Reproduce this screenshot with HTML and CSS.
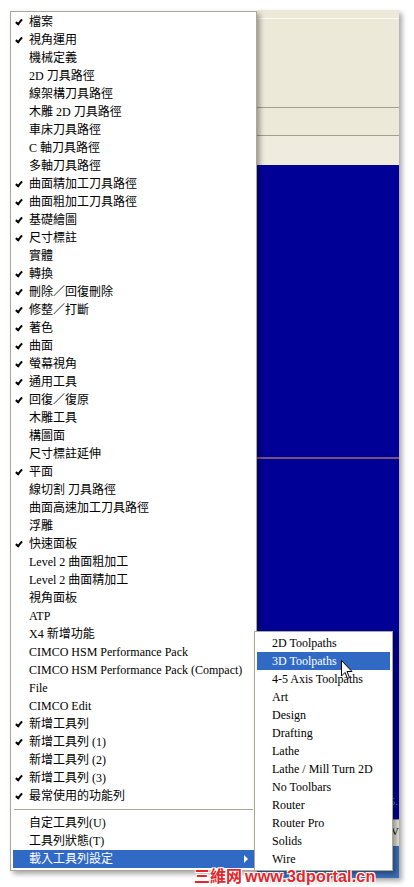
FILE: index.html
```html
<!DOCTYPE html>
<html lang="zh-Hant">
<head>
    <meta charset="UTF-8">
    <meta name="viewport" content="width=device-width, initial-scale=1.0">
    <title>工具列</title>
    <link rel="stylesheet" href="styles.css">
</head>
<body>
    <div class="desktop">
        <div class="app-window">
            <div class="toolbars">
                <div class="tb-row tb-top"></div>
                <div class="tb-row tb-big"></div>
                <div class="tb-row tb-mid"></div>
                <div class="tb-row tb-low"></div>
            </div>
            <div class="viewport">
                <div class="vp-top"></div>
                <div class="vp-bottom"></div>
            </div>
            <div class="status">
                <div class="st-green">5.</div>
                <div class="st-gray">V</div>
                <div class="st-blue"></div>
            </div>
        </div>

        <ul class="menu">
            <li class="item checked">檔案</li>
            <li class="item checked">視角運用</li>
            <li class="item">機械定義</li>
            <li class="item">2D 刀具路徑</li>
            <li class="item">線架構刀具路徑</li>
            <li class="item">木雕 2D 刀具路徑</li>
            <li class="item">車床刀具路徑</li>
            <li class="item">C 軸刀具路徑</li>
            <li class="item">多軸刀具路徑</li>
            <li class="item checked">曲面精加工刀具路徑</li>
            <li class="item checked">曲面粗加工刀具路徑</li>
            <li class="item checked">基礎繪圖</li>
            <li class="item checked">尺寸標註</li>
            <li class="item">實體</li>
            <li class="item checked">轉換</li>
            <li class="item checked">刪除／回復刪除</li>
            <li class="item checked">修整／打斷</li>
            <li class="item checked">著色</li>
            <li class="item checked">曲面</li>
            <li class="item checked">螢幕視角</li>
            <li class="item checked">通用工具</li>
            <li class="item checked">回復／復原</li>
            <li class="item">木雕工具</li>
            <li class="item">構圖面</li>
            <li class="item">尺寸標註延伸</li>
            <li class="item checked">平面</li>
            <li class="item">線切割 刀具路徑</li>
            <li class="item">曲面高速加工刀具路徑</li>
            <li class="item">浮雕</li>
            <li class="item checked">快速面板</li>
            <li class="item">Level 2 曲面粗加工</li>
            <li class="item">Level 2 曲面精加工</li>
            <li class="item">視角面板</li>
            <li class="item">ATP</li>
            <li class="item">X4 新增功能</li>
            <li class="item">CIMCO HSM Performance Pack</li>
            <li class="item">CIMCO HSM Performance Pack (Compact)</li>
            <li class="item">File</li>
            <li class="item">CIMCO Edit</li>
            <li class="item checked">新增工具列</li>
            <li class="item checked">新增工具列 (1)</li>
            <li class="item">新增工具列 (2)</li>
            <li class="item checked">新增工具列 (3)</li>
            <li class="item checked">最常使用的功能列</li>
            <li class="separator"></li>
            <li class="item">自定工具列(U)</li>
            <li class="item">工具列狀態(T)</li>
            <li class="item active has-sub">載入工具列設定</li>
        </ul>

        <ul class="menu submenu">
            <li class="item">2D Toolpaths</li>
            <li class="item active">3D Toolpaths</li>
            <li class="item">4-5 Axis Toolpaths</li>
            <li class="item">Art</li>
            <li class="item">Design</li>
            <li class="item">Drafting</li>
            <li class="item">Lathe</li>
            <li class="item">Lathe / Mill Turn 2D</li>
            <li class="item">No Toolbars</li>
            <li class="item">Router</li>
            <li class="item">Router Pro</li>
            <li class="item">Solids</li>
            <li class="item">Wire</li>
        </ul>

        <svg class="cursor" width="12" height="20" viewBox="0 0 12 20">
            <path d="M0.5 0.5 L0.5 16 L4 12.5 L6.5 18.5 L8.5 17.5 L6 11.5 L11 11.5 Z" fill="#fff" stroke="#000" stroke-width="1"/>
        </svg>

        <div class="watermark">
            <span class="wm-cn">三維网</span><span class="wm-url">www.3dportal.cn</span>
        </div>
    </div>
</body>
</html>
```

FILE: styles.css
```css
body {
    margin: 0;
    background-color: #fff;
    font-family: "Liberation Serif", "Noto Sans CJK TC", serif;
    font-size: 12px;
}
.desktop {
    position: relative;
    width: 414px;
    height: 887px;
    overflow: hidden;
}

/* background application window */
.app-window {
    position: absolute;
    left: 257px;
    top: 10px;
    width: 142px;
    height: 868px;
    display: flex;
    flex-direction: column;
    background-color: #ece9d8;
    box-shadow: 3px 3px 5px rgba(0, 0, 0, 0.35);
}
.toolbars {
    display: flex;
    flex-direction: column;
    height: 155px;
}
.tb-row {
    background-color: #ece9d8;
}
.tb-top {
    height: 8px;
    border-bottom: 1px solid #fbfaf5;
}
.tb-big {
    height: 88px;
    border-bottom: 1px solid #a29f91;
}
.tb-mid {
    height: 27px;
    border-bottom: 1px solid #a29f91;
}
.tb-low {
    flex: 1;
    background-color: #efecdf;
}
.viewport {
    display: flex;
    flex-direction: column;
    height: 630px;
    background-color: #000096;
}
.vp-top {
    height: 292px;
    border-bottom: 2px solid #7a5478;
}
.vp-bottom {
    flex: 1;
}
.status {
    flex: 1;
    display: flex;
    flex-direction: column;
    background-color: #000096;
}
.st-green {
    height: 24px;
    color: #2fb070;
    font-size: 11px;
    text-align: right;
    padding-right: 1px;
}
.st-gray {
    height: 26px;
    background-color: #e4e2d8;
    border-top: 1px solid #8c8c8c;
    text-align: right;
    font-size: 11px;
    line-height: 22px;
}
.st-blue {
    flex: 1;
    background-color: #3a6fb8;
}

/* popup menus */
.menu {
    position: absolute;
    left: 10px;
    top: 11px;
    width: 241px;
    margin: 0;
    padding: 1px 2px 2px;
    list-style: none;
    background-color: #fff;
    border: 1px solid #aca899;
    box-shadow: 3px 3px 5px rgba(0, 0, 0, 0.35);
}
.submenu {
    left: 254px;
    top: 631px;
    width: 133px;
    padding: 2px;
}
.item {
    position: relative;
    height: 18px;
    line-height: 18px;
    padding-left: 16px;
    color: #000;
    white-space: nowrap;
}
.submenu .item {
    padding-left: 15px;
}
.item.checked::before {
    content: "";
    position: absolute;
    left: 4px;
    top: 5px;
    width: 2px;
    height: 5px;
    border-right: 2px solid #000;
    border-bottom: 2px solid #000;
    transform: rotate(40deg);
}
.item.active {
    background-color: #316ac5;
    color: #fff;
}
.item.has-sub::after {
    content: "";
    position: absolute;
    right: 6px;
    top: 5px;
    border-top: 4px solid transparent;
    border-bottom: 4px solid transparent;
    border-left: 4px solid #fff;
}
.separator {
    height: 9px;
    background: linear-gradient(#fff 4px, #aca899 4px, #aca899 5px, #fff 5px);
    margin: 0 1px;
}

.cursor {
    position: absolute;
    left: 341px;
    top: 660px;
}

.watermark {
    position: absolute;
    left: 194px;
    top: 863px;
    font-family: "Liberation Sans", "Noto Sans CJK SC", sans-serif;
    font-weight: bold;
    color: #e3262c;
    text-shadow: -1px -1px 0 #fff, 1px -1px 0 #fff, -1px 1px 0 #fff, 1px 1px 0 #fff;
    white-space: nowrap;
}
.wm-cn {
    font-size: 16px;
}
.wm-url {
    font-size: 16px;
    letter-spacing: 0.2px;
    margin-left: 3px;
}
```
